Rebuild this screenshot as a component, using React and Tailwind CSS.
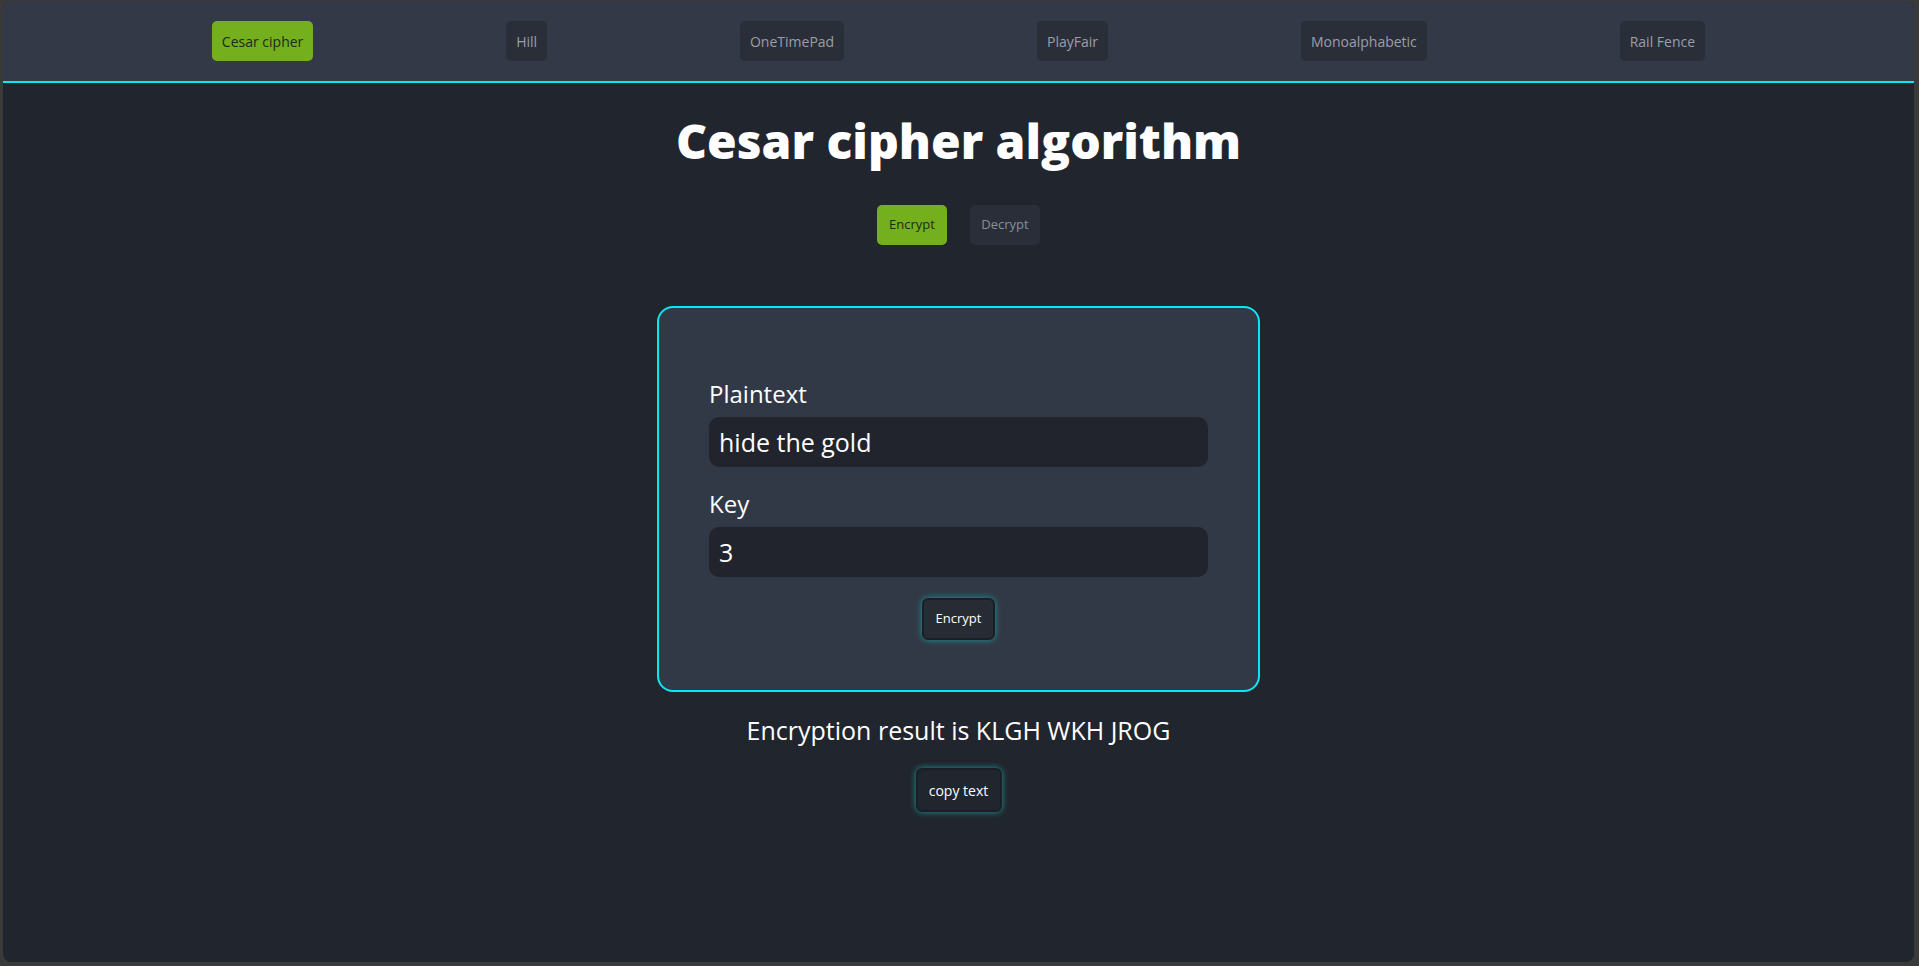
import { useState } from 'react';

const ciphers = ['Cesar cipher', 'Hill', 'OneTimePad', 'PlayFair', 'Monoalphabetic', 'Rail Fence'];

function caesar(text, key) {
  return text
    .toUpperCase()
    .split('')
    .map((c) => {
      const code = c.charCodeAt(0);
      if (code < 65 || code > 90) return c;
      return String.fromCharCode(((code - 65 + key) % 26 + 26) % 26 + 65);
    })
    .join('');
}

function App() {
  const [active, setActive] = useState('Cesar cipher');
  const [mode, setMode] = useState('Encrypt');
  const [plaintext, setPlaintext] = useState('hide the gold');
  const [key, setKey] = useState('3');

  const result = caesar(plaintext, mode === 'Encrypt' ? Number(key) : -Number(key));

  return (
    <div className="h-[966px] bg-[#3a3a3a] pl-[3px] pr-[5px] pt-px pb-[4px] font-['Open_Sans',sans-serif]">
      <div className="h-full rounded-[8px] bg-[#21252d] overflow-hidden">
        {/* Navbar */}
        <nav className="h-[82px] bg-[#333946] border-b-2 border-[#0de6f2] flex items-center justify-evenly px-4">
          {ciphers.map((name) => (
            <button
              key={name}
              onClick={() => setActive(name)}
              className={`h-[40px] px-[10px] rounded-[5px] text-[14px] ${
                active === name ? 'bg-[#74af1e] text-[#1f2a12]' : 'bg-[#2a2e39] text-[#9a9eab]'
              }`}
            >
              {name}
            </button>
          ))}
        </nav>

        <div className="flex flex-col items-center">
          <h1 className="mt-[34px] text-[48px] leading-none font-extrabold text-white">Cesar cipher algorithm</h1>

          <div className="mt-10 flex gap-[23px]">
            {['Encrypt', 'Decrypt'].map((m) => (
              <button
                key={m}
                onClick={() => setMode(m)}
                className={`h-[40px] w-[70px] rounded-[5px] text-[13px] ${
                  mode === m ? 'bg-[#74af1e] text-[#1f2a12]' : 'bg-[#2a2e38] text-[#8b8f9a]'
                }`}
              >
                {m}
              </button>
            ))}
          </div>

          {/* Form card */}
          <div className="mt-[61px] w-[603px] h-[386px] rounded-2xl border-2 border-[#0de6f2] bg-[#323946] px-[50px] pt-[70px] flex flex-col">
            <label className="text-2xl text-white">Plaintext</label>
            <input
              value={plaintext}
              onChange={(e) => setPlaintext(e.target.value)}
              className="mt-[7px] h-[50px] w-full rounded-[10px] bg-[#21242d] px-[10px] text-[25px] text-white outline-none"
            />
            <label className="mt-[21px] text-2xl text-white">Key</label>
            <input
              value={key}
              onChange={(e) => setKey(e.target.value)}
              className="mt-[7px] h-[50px] w-full rounded-[10px] bg-[#21242d] px-[10px] text-[25px] text-white outline-none"
            />
            <div className="mt-[21px] flex justify-center">
              <button className="h-[42px] w-[73px] rounded-md border-2 border-[#1b1e24] bg-[#272b34] text-[13px] text-white shadow-[0_0_6px_#1a9a9a]">
                {mode}
              </button>
            </div>
          </div>

          <p className="mt-[22px] text-[25px] leading-8 text-white">
            {mode === 'Encrypt' ? 'Encryption' : 'Decryption'} result is {result}
          </p>

          <button className="mt-[22px] h-[44px] w-[86px] rounded-md border-2 border-[#1b1e24] bg-[#21252d] text-[14px] text-white shadow-[0_0_6px_#1a9a9a]">
            copy text
          </button>
        </div>
      </div>
    </div>
  );
}

export default App;
